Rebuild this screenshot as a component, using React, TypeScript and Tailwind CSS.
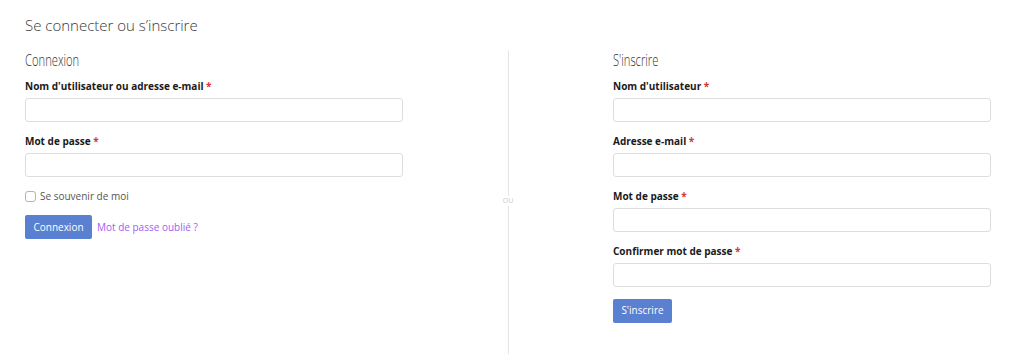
import React from 'react';

const openSans = "font-['Open_Sans',sans-serif]";

function Field({ label, last = false }: { label: string; last?: boolean }) {
  return (
    <div className={last ? 'mb-[9px]' : 'mb-[11px]'}>
      <label className="block h-4 text-[10px] leading-4 font-bold text-[#1a1a1a]">
        {label} <span className="text-[#d63638]">*</span>
      </label>
      <input
        type="text"
        className="mt-1 block h-6 w-full rounded-[3px] border border-[#dddddd] bg-white outline-none"
      />
    </div>
  );
}

function SectionTitle({ children }: { children: React.ReactNode }) {
  return (
    <h3 className="h-5 mb-2 text-[16px] leading-5 font-light text-[#333]">
      <span className="inline-block origin-left scale-x-[0.7]">{children}</span>
    </h3>
  );
}

export default function App() {
  return (
    <div className={`${openSans} w-[1024px] h-[364px] bg-white px-[25px] pt-[14px] overflow-hidden`}>
      <h2 className="h-[22px] text-[15px] leading-[22px] font-light text-[#3a3a3a]">
        Se connecter ou s’inscrire
      </h2>
      <div className="mt-[14px] flex">
        {/* Connexion */}
        <div className="w-[378px]">
          <SectionTitle>Connexion</SectionTitle>
          <Field label="Nom d'utilisateur ou adresse e-mail" />
          <Field label="Mot de passe" />
          <label className="mt-[2px] flex h-4 items-center gap-1 text-[10px] text-[#555]">
            <span className="h-[11px] w-[11px] rounded-[3px] border border-[#b5b5b5] bg-white" />
            <span>Se souvenir de moi</span>
          </label>
          <div className="mt-[11px] flex items-center gap-[5px]">
            <button className="h-6 w-[67px] rounded-[2px] bg-[#5a80d1] text-[10px] text-white">
              Connexion
            </button>
            <a className="text-[10px] text-[#a35ef0]">Mot de passe oublié ?</a>
          </div>
        </div>

        {/* divider */}
        <div className="relative flex w-[210px] justify-center">
          <div className="w-px bg-[#e5e5e5]" />
          <span className="absolute top-[146px] left-1/2 -translate-x-1/2 bg-white px-[2px] text-[7px] leading-[10px] text-[#c8c8c8]">
            OU
          </span>
        </div>

        {/* S'inscrire */}
        <div className="w-[378px] pb-[31px]">
          <SectionTitle>S'inscrire</SectionTitle>
          <Field label="Nom d'utilisateur" />
          <Field label="Adresse e-mail" />
          <Field label="Mot de passe" />
          <Field label="Confirmer mot de passe" last />
          <button className="h-6 w-[59px] rounded-[2px] bg-[#5a80d1] text-[10px] text-white">
            S'inscrire
          </button>
        </div>
      </div>
    </div>
  );
}
